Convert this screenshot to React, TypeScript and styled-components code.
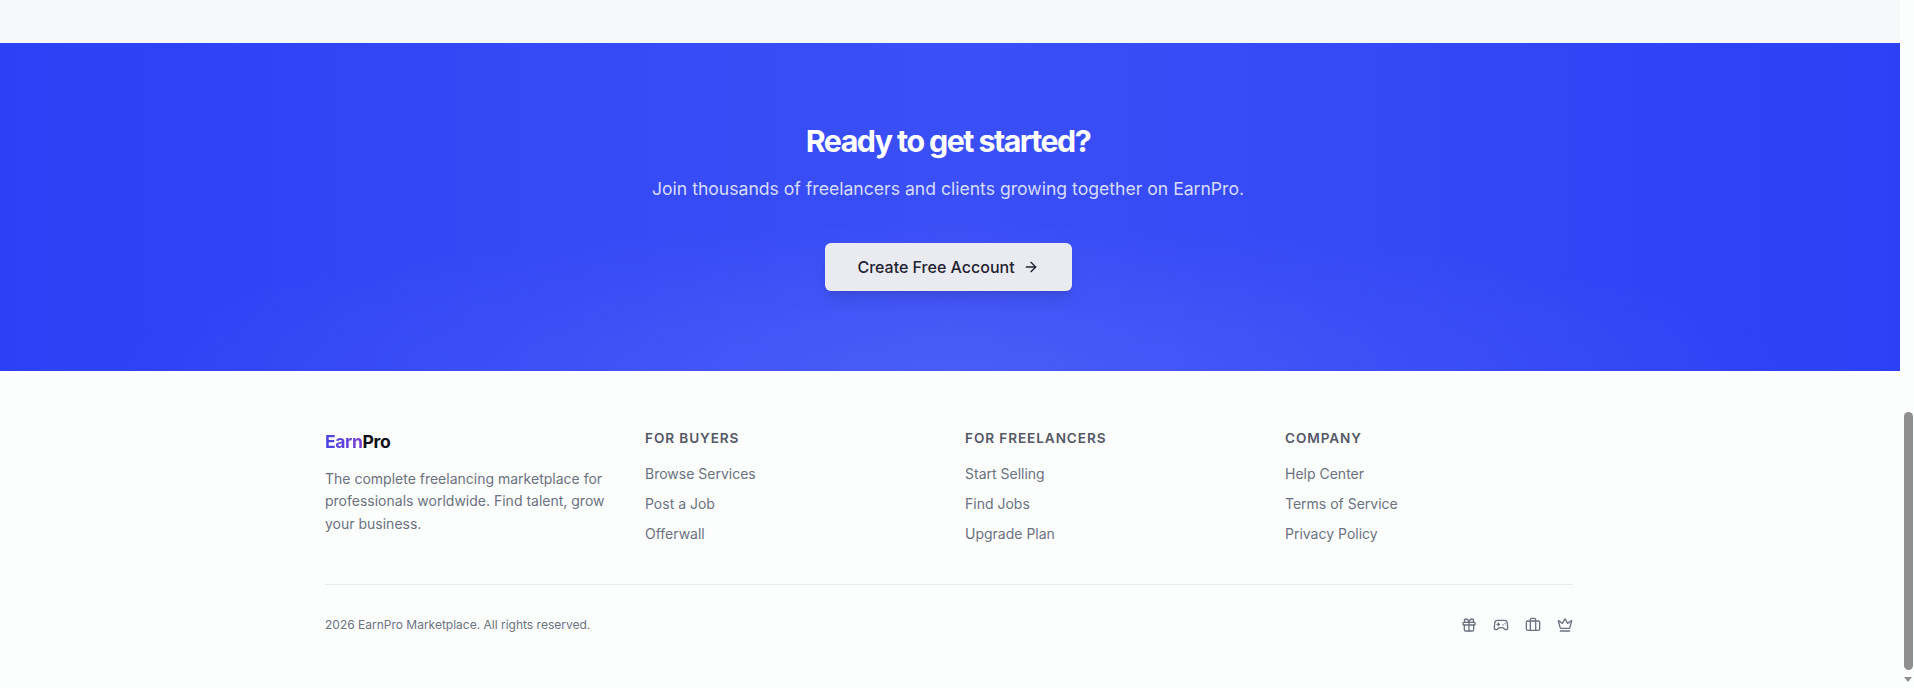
import { FC } from "react";
import styled, { createGlobalStyle } from "styled-components";
import { ArrowRight, Gift, Gamepad2, Briefcase, Crown } from "lucide-react";

const GlobalStyle = createGlobalStyle`
  html, body {
    margin: 0;
    height: 688px;
    overflow: hidden;
    background: #fcfdfd;
    font-family: Inter, "Liberation Sans", sans-serif;
  }
`;

const Shell = styled.div`
  display: flex;
  width: 1914px;
  height: 688px;
  overflow: hidden;
`;

const Page = styled.div`
  width: 1900px;
  flex: none;
`;

const TopStrip = styled.div`
  height: 43px;
  background: #f7f8fa;
`;

const Cta = styled.section`
  height: 328px;
  box-sizing: border-box;
  padding: 80px 4px 0 0;
  display: flex;
  flex-direction: column;
  align-items: center;
  background:
    radial-gradient(ellipse 45% 45% at 50% 100%, rgba(255, 255, 255, 0.08), rgba(255, 255, 255, 0) 100%),
    linear-gradient(90deg, #2c40f5 0%, #3b4ff6 50%, #2c40f5 100%);
`;

const CtaTitle = styled.h2`
  margin: 0;
  font-size: 30.4px;
  line-height: 36px;
  font-weight: 700;
  letter-spacing: -1.55px;
  color: #ffffff;
`;

const CtaText = styled.p`
  margin: 16px 0 0;
  font-size: 17.6px;
  line-height: 28px;
  color: #d6dcfd;
`;

const CtaButton = styled.a`
  margin-top: 40px;
  width: 247px;
  height: 48px;
  display: flex;
  align-items: center;
  justify-content: center;
  gap: 8px;
  border-radius: 6px;
  background: #eaebf0;
  color: #1f2230;
  font-size: 16px;
  font-weight: 500;
  box-shadow: 0 10px 15px -3px rgba(0, 0, 0, 0.1), 0 4px 6px -4px rgba(0, 0, 0, 0.1);
`;

const Footer = styled.footer`
  width: 1248px;
  margin-left: 325px;
  padding-top: 58px;
`;

const Columns = styled.div`
  display: grid;
  grid-template-columns: repeat(4, 1fr);
  column-gap: 32px;
  padding-bottom: 40px;
  border-bottom: 1px solid #e7e9ec;
`;

const Logo = styled.div`
  font-size: 17.6px;
  line-height: 25px;
  font-weight: 700;
  letter-spacing: -0.4px;
  color: #0f1118;
`;

const LogoAccent = styled.span`
  background: linear-gradient(90deg, #4a45e0, #7a3fd0);
  -webkit-background-clip: text;
  background-clip: text;
  color: transparent;
`;

const Blurb = styled.p`
  margin: 14px 0 0;
  font-size: 14px;
  line-height: 22.4px;
  color: #6b7280;
`;

const ColumnTitle = styled.h4`
  margin: 0 0 17px;
  font-size: 13.6px;
  line-height: 18px;
  font-weight: 600;
  letter-spacing: 0.9px;
  color: #555866;
`;

const LinkList = styled.ul`
  list-style: none;
  margin: 0;
  padding: 0;
  display: flex;
  flex-direction: column;
  gap: 10px;
`;

const LinkItem = styled.li`
  font-size: 14px;
  line-height: 20px;
  color: #6b7280;
`;

const BottomBar = styled.div`
  display: flex;
  align-items: center;
  justify-content: space-between;
  padding-top: 32px;
`;

const Copyright = styled.span`
  font-size: 12px;
  line-height: 16px;
  color: #6b7280;
`;

const Socials = styled.div`
  display: flex;
  gap: 16px;
  color: #6b7280;
`;

const ScrollTrack = styled.div`
  flex: none;
  width: 14px;
  position: relative;
  background: #fcfdfd;
`;

const ScrollThumb = styled.div`
  position: absolute;
  top: 412px;
  left: 4px;
  width: 9px;
  height: 258px;
  border-radius: 4.5px;
  background: #8f8f8f;
`;

const ScrollArrow = styled.div`
  position: absolute;
  top: 677px;
  left: 4px;
  width: 0;
  height: 0;
  border-left: 4.5px solid transparent;
  border-right: 4.5px solid transparent;
  border-top: 5px solid #8f8f8f;
`;

const columns = [
  { title: "FOR BUYERS", links: ["Browse Services", "Post a Job", "Offerwall"] },
  { title: "FOR FREELANCERS", links: ["Start Selling", "Find Jobs", "Upgrade Plan"] },
  { title: "COMPANY", links: ["Help Center", "Terms of Service", "Privacy Policy"] },
];

const App: FC = () => (
  <Shell>
    <GlobalStyle />
    <Page>
      <TopStrip />
      <Cta>
        <CtaTitle>Ready to get started?</CtaTitle>
        <CtaText>Join thousands of freelancers and clients growing together on EarnPro.</CtaText>
        <CtaButton>
          Create Free Account
          <ArrowRight size={16} />
        </CtaButton>
      </Cta>
      <Footer>
        <Columns>
          <div>
            <Logo>
              <LogoAccent>Earn</LogoAccent>Pro
            </Logo>
            <Blurb>
              The complete freelancing marketplace for professionals worldwide. Find talent, grow
              your business.
            </Blurb>
          </div>
          {columns.map((column) => (
            <div key={column.title}>
              <ColumnTitle>{column.title}</ColumnTitle>
              <LinkList>
                {column.links.map((link) => (
                  <LinkItem key={link}>{link}</LinkItem>
                ))}
              </LinkList>
            </div>
          ))}
        </Columns>
        <BottomBar>
          <Copyright>2026 EarnPro Marketplace. All rights reserved.</Copyright>
          <Socials>
            <Gift size={16} />
            <Gamepad2 size={16} />
            <Briefcase size={16} />
            <Crown size={16} />
          </Socials>
        </BottomBar>
      </Footer>
    </Page>
    <ScrollTrack>
      <ScrollThumb />
      <ScrollArrow />
    </ScrollTrack>
  </Shell>
);

export default App;
